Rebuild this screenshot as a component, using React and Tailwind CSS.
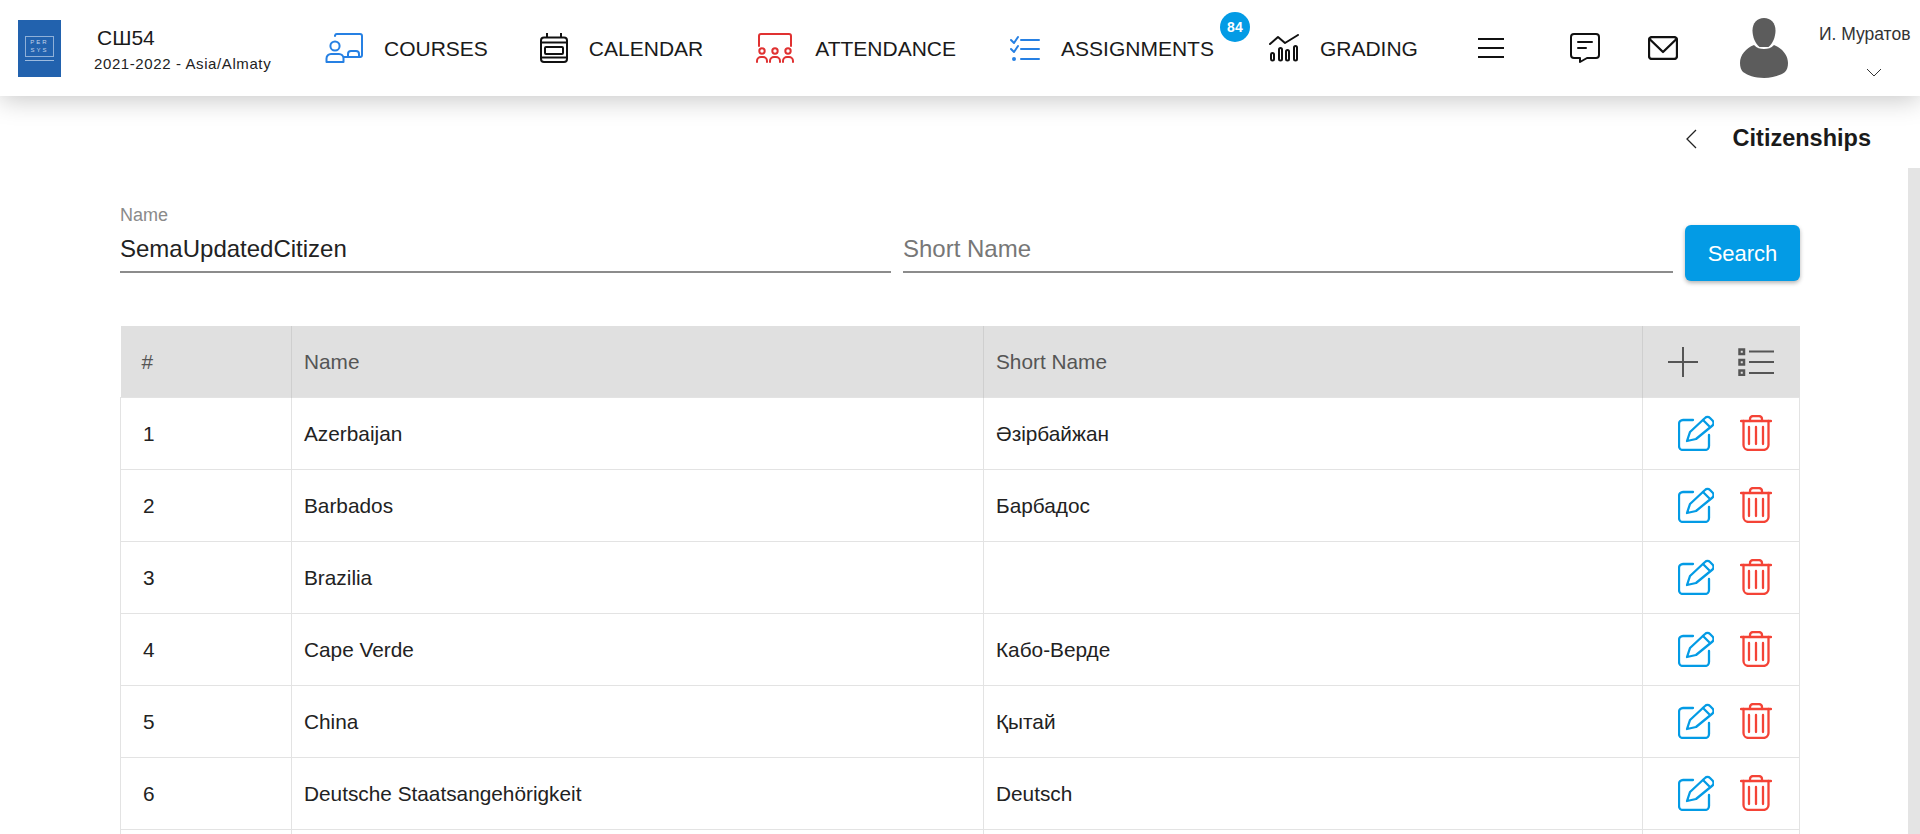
import React from "react";

const rows = [
  ["1", "Azerbaijan", "Әзірбайжан"],
  ["2", "Barbados", "Барбадос"],
  ["3", "Brazilia", ""],
  ["4", "Cape Verde", "Кабо-Верде"],
  ["5", "China", "Қытай"],
  ["6", "Deutsche Staatsangehörigkeit", "Deutsch"],
];

const CoursesIcon = () => (
  <svg width="38" height="30" viewBox="0 0 38 30" fill="none" stroke="#2680e3" strokeWidth="2" strokeLinecap="round" strokeLinejoin="round">
    <path d="M10 3V2.500A2 2 0 0 1 12 1h23a2 2 0 0 1 2 2v19a2 2 0 0 1-2 2h-1" />
    <path d="M23 24v-3a3 3 0 0 1 3-3h5a3 3 0 0 1 3 3v3z" />
    <path d="M19 24h16" />
    <circle cx="10" cy="13" r="4.600" />
    <path d="M1.500 29v-3.500a4.500 4.500 0 0 1 4.500-4.500h8a4.500 4.500 0 0 1 4.500 4.500V29z" />
  </svg>
);

const CalendarIcon = () => (
  <svg width="28" height="30" viewBox="0 0 28 30" fill="none" stroke="#111" strokeWidth="2" strokeLinejoin="round">
    <path d="M7 0v5M21 0v5" />
    <rect x="1" y="4.500" width="26" height="24.500" rx="3" />
    <path d="M1 9.500h26" />
    <rect x="5" y="14" width="18" height="7" rx="1" />
    <path d="M1 24.500h26" />
  </svg>
);

const AttendanceIcon = () => (
  <svg width="38" height="30" viewBox="0 0 38 30" fill="none" stroke="#e03131" strokeWidth="2" strokeLinecap="round">
    <path d="M3 13V3a2 2 0 0 1 2-2h28a2 2 0 0 1 2 2v10" />
    <circle cx="6" cy="18" r="2.700" />
    <circle cx="19" cy="18" r="2.700" />
    <circle cx="32" cy="18" r="2.700" />
    <path d="M1 29v-1a4 4 0 0 1 4-4h2a4 4 0 0 1 4 4v1" />
    <path d="M14 29v-1a4 4 0 0 1 4-4h2a4 4 0 0 1 4 4v1" />
    <path d="M27 29v-1a4 4 0 0 1 4-4h2a4 4 0 0 1 4 4v1" />
  </svg>
);

const AssignmentsIcon = () => (
  <svg width="30" height="26" viewBox="0 0 30 26" fill="none" stroke="#2680e3" strokeWidth="2" strokeLinecap="round" strokeLinejoin="round">
    <path d="M1 5l3 3 4-6" />
    <path d="M1 14l3 3 4-6" />
    <path d="M11 5h18M11 14h18M11 24h18" />
    <circle cx="4" cy="24" r="1" fill="#2680e3" />
  </svg>
);

const GradingIcon = () => (
  <svg width="30" height="28" viewBox="0 0 30 28" fill="none" stroke="#111" strokeWidth="2" strokeLinecap="round" strokeLinejoin="round">
    <path d="M1 10l8-7 7 6L29 1" />
    <rect x="2" y="19" width="3" height="7.500" rx="1.500" />
    <rect x="10" y="14" width="3" height="12.500" rx="1.500" />
    <rect x="17" y="16" width="3" height="10.500" rx="1.500" />
    <rect x="25" y="12" width="3" height="14.500" rx="1.500" />
  </svg>
);

const MenuIcon = () => (
  <svg width="26" height="22" viewBox="0 0 26 22" fill="none" stroke="#111" strokeWidth="2">
    <path d="M0 2h26M0 11h26M0 20h26" />
  </svg>
);

const ChatIcon = () => (
  <svg width="30" height="30" viewBox="0 0 30 30" fill="none" stroke="#111" strokeWidth="2" strokeLinecap="round" strokeLinejoin="round">
    <path d="M4 1h22a3 3 0 0 1 3 3v18a3 3 0 0 1-3 3H17l-7 4v-4H4a3 3 0 0 1-3-3V4a3 3 0 0 1 3-3z" />
    <path d="M8 9h14M8 15h8" />
  </svg>
);

const MailIcon = () => (
  <svg width="30" height="24" viewBox="0 0 30 24" fill="none" stroke="#111" strokeWidth="2.300" strokeLinejoin="round">
    <rect x="1" y="1" width="28" height="22" rx="3" />
    <path d="M1.500 3L15 16 28.500 3" />
  </svg>
);

const UserIcon = () => (
  <svg width="48" height="60" viewBox="0 0 48 60" fill="#5c5c5c">
    <path d="M24 0c7 0 11.500 5 11.500 12.500 0 6-2.500 13-7 16.500h-9c-4.500-3.500-7-10.500-7-16.500C12.500 5 17 0 24 0z" />
    <path d="M14 27c3 3 6 4 10 4s7-1 10-4c8 3 14 10 14 18 0 4-1 7-3 9-4 3-12 6-21 6s-17-3-21-6c-2-2-3-5-3-9 0-8 6-15 14-18z" />
  </svg>
);

const EditIcon = () => (
  <svg width="36" height="36" viewBox="0 0 36 36" fill="none" stroke="#039be5" strokeWidth="2.300" strokeLinecap="round" strokeLinejoin="round">
    <path d="M15 5H5a4 4 0 0 0-4 4v22a4 4 0 0 0 4 4h22a4 4 0 0 0 4-4V20" />
    <path d="M9 26l3-9L27 3a3.500 3.500 0 0 1 5 0l2.500 2.500a3.500 3.500 0 0 1 0 5L18 24z" />
    <path d="M25 5l6 6" />
  </svg>
);

const TrashIcon = () => (
  <svg width="32" height="36" viewBox="0 0 32 36" fill="none" stroke="#f44336" strokeWidth="2.300" strokeLinecap="round" strokeLinejoin="round">
    <path d="M1 6h30" />
    <path d="M10 6V4a3 3 0 0 1 3-3h6a3 3 0 0 1 3 3v2" />
    <path d="M3.500 6v24a5 5 0 0 0 5 5h15a5 5 0 0 0 5-5V6" />
    <path d="M9 12v17M16 12v17M23 12v17" />
  </svg>
);

const PlusIcon = () => (
  <svg width="30" height="30" viewBox="0 0 30 30" fill="none" stroke="#555" strokeWidth="2">
    <path d="M0 15h30M15 0v30" />
  </svg>
);

const ListIcon = () => (
  <svg width="36" height="28" viewBox="0 0 36 28" fill="none" stroke="#555" strokeWidth="2">
    <rect x="1.500" y="1.500" width="4.500" height="4.500" strokeWidth="2.500" />
    <rect x="1.500" y="12" width="4.500" height="4.500" strokeWidth="2.500" />
    <rect x="1.500" y="22.500" width="4.500" height="4.500" strokeWidth="2.500" />
    <path d="M11 3.500h25M11 14h25M11 25h25" />
  </svg>
);

const NavItem = ({ icon, label, className }) => (
  <div className={"flex items-center " + className}>
    {icon}
    <span className="mt-[2px] ml-[21px] text-[21px] leading-[30px] text-[#1a1a1a]">{label}</span>
  </div>
);

const App = () => {
  return (
    <div className="h-[834px] overflow-hidden bg-white font-['Liberation_Sans',Arial,sans-serif]">
      <header className="relative z-10 flex h-24 items-center bg-white shadow-[0_4px_24px_rgba(0,0,0,0.22)]">
        <div className="ml-[18px] flex h-[57px] w-[43px] flex-col items-center justify-center bg-[#2262ae]">
          <div className="flex h-[21px] w-[29px] items-center justify-center border border-[#8fb0d8] text-center text-[6px] leading-[8px] tracking-[2px] text-[#c3d4ea]">
            PER SYS
          </div>
          <div className="mt-[3px] h-[1px] w-[29px] bg-[#9dbbdf]"></div>
        </div>
        <div className="mt-[2px] ml-[33px] w-[190px]">
          <div className="ml-[3px] text-[21px] leading-[24px] text-[#1a1a1a]">СШ54</div>
          <div className="mt-[5px] text-[15px] leading-[18px] tracking-[0.6px] text-[#222]">2021-2022 - Asia/Almaty</div>
        </div>
        <NavItem icon={<CoursesIcon />} label="COURSES" className="ml-[41px]" />
        <NavItem icon={<CalendarIcon />} label="CALENDAR" className="ml-[52px]" />
        <NavItem icon={<AttendanceIcon />} label="ATTENDANCE" className="ml-[53px]" />
        <div className="relative ml-[54px]">
          <NavItem icon={<AssignmentsIcon />} label="ASSIGNMENTS" />
          <span className="absolute -top-[20px] -right-[36px] flex h-[30px] w-[30px] items-center justify-center rounded-full bg-[#039be5] text-[14px] font-bold text-white">
            84
          </span>
        </div>
        <NavItem icon={<GradingIcon />} label="GRADING" className="ml-[55px]" />
        <div className="ml-[60px]"><MenuIcon /></div>
        <div className="ml-[66px]"><ChatIcon /></div>
        <div className="ml-[48px]"><MailIcon /></div>
        <div className="ml-[62px]"><UserIcon /></div>
        <div className="mt-[4px] ml-[31px] flex flex-col">
          <span className="text-[17.500px] leading-[20px] whitespace-nowrap text-[#333]">И. Муратов</span>
          <svg className="mt-[24px] ml-[47px]" width="16" height="9" viewBox="0 0 16 9" fill="none" stroke="#333" strokeWidth="1">
            <path d="M1 1l7 7 7-7" />
          </svg>
        </div>
      </header>

      <div className="flex">
        <main className="min-w-0 flex-1">
          <div className="flex h-[85px] items-center justify-end pr-[37px]">
            <svg width="12" height="20" viewBox="0 0 12 20" fill="none" stroke="#222" strokeWidth="1.300">
              <path d="M11 1L2 10l9 9" />
            </svg>
            <h1 className="ml-[36px] text-[23.500px] font-bold text-[#1a1a1a]">Citizenships</h1>
          </div>

          <div className="mt-[23px] ml-[120px] flex w-[1680px] items-end">
            <div className="w-[771px] border-b-2 border-[#8c8c8c]">
              <div className="text-[18px] leading-[22px] text-[#8a8a8a]">Name</div>
              <div className="h-[45px] text-[24px] leading-[45px] text-[#222]">SemaUpdatedCitizen</div>
            </div>
            <div className="ml-[12px] w-[770px] border-b-2 border-[#8c8c8c]">
              <div className="h-[45px] text-[24px] leading-[45px] text-[#777]">Short Name</div>
            </div>
            <button className="mb-[-8px] ml-[12px] h-[56px] w-[115px] rounded-[6px] bg-[#039be5] text-[22px] text-white shadow-[0_2px_4px_rgba(0,0,0,0.3)]">
              Search
            </button>
          </div>

          <table className="mt-[53px] ml-[120px] w-[1680px] table-fixed border-collapse text-[20.800px] text-[#222]">
            <thead>
              <tr className="h-[71px] bg-[#e0e0e0] text-left text-[#555]">
                <th className="w-[171px] border-r border-[#cfcfcf] pl-[21px] font-normal">#</th>
                <th className="w-[692px] border-r border-[#cfcfcf] pl-[12px] font-normal">Name</th>
                <th className="w-[659px] border-r border-[#cfcfcf] pl-[12px] font-normal">Short Name</th>
                <th className="font-normal">
                  <div className="flex items-center justify-center gap-[40px] pt-[2px]">
                    <PlusIcon />
                    <ListIcon />
                  </div>
                </th>
              </tr>
            </thead>
            <tbody>
              {rows.map((row) => (
                <tr key={row[0]} className="h-[72px] border border-[#e3e3e3]">
                  <td className="border-r border-[#e3e3e3] pt-[2px] pl-[22px]">{row[0]}</td>
                  <td className="border-r border-[#e3e3e3] pt-[2px] pl-[12px]">{row[1]}</td>
                  <td className="border-r border-[#e3e3e3] pt-[2px] pl-[12px]">{row[2]}</td>
                  <td>
                    <div className="flex items-center justify-center gap-[26px] pl-[8px]">
                      <EditIcon />
                      <TrashIcon />
                    </div>
                  </td>
                </tr>
              ))}
              <tr className="h-[72px] border border-[#e3e3e3]">
                <td className="border-r border-[#e3e3e3]"></td>
                <td className="border-r border-[#e3e3e3]"></td>
                <td className="border-r border-[#e3e3e3]"></td>
                <td></td>
              </tr>
            </tbody>
          </table>
        </main>
        <div className="mt-[72px] h-[666px] w-[12px] shrink-0 bg-[#e4e4e4]"></div>
      </div>
    </div>
  );
};

export default App;
